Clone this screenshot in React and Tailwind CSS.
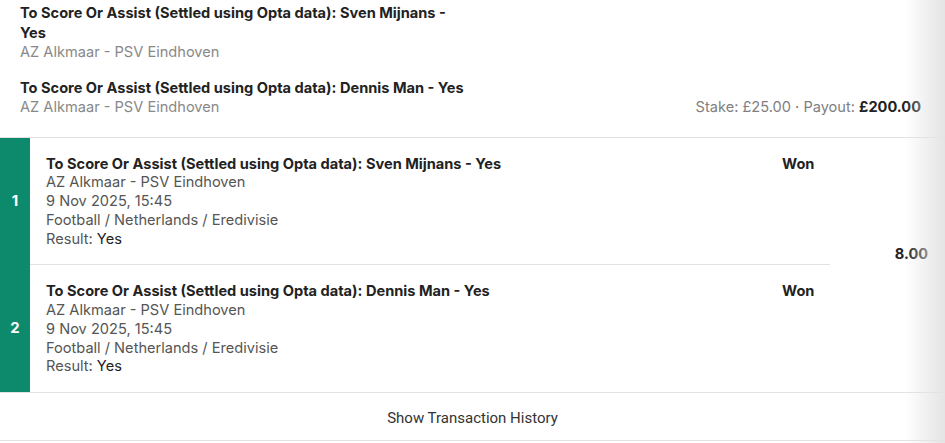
import React from "react";

const legs = [
  { n: 1, player: "Sven Mijnans" },
  { n: 2, player: "Dennis Man" },
];

const Leg = ({ leg, last }) => (
  <div className="flex">
    <div className="w-[30px] shrink-0 bg-[#0d8a6b] flex items-center justify-center text-white font-bold text-[15px]">
      {leg.n}
    </div>
    <div
      className={
        "flex flex-1 pt-[17px] pb-[16px] pl-4 " +
        (last ? "" : "border-b border-[#e2e2e2]")
      }
    >
      <div className="flex-1 text-[14.6px] leading-[18.75px] text-[#555]">
        <div className="font-bold text-[#222]">
          To Score Or Assist (Settled using Opta data): {leg.player} - Yes
        </div>
        <div>AZ Alkmaar - PSV Eindhoven</div>
        <div>9 Nov 2025, 15:45</div>
        <div>Football / Netherlands / Eredivisie</div>
        <div>
          Result: <span className="text-[#222]">Yes</span>
        </div>
      </div>
      <div className="w-[48px] font-bold text-[14.6px] leading-[18.75px] text-[#222]">
        Won
      </div>
    </div>
  </div>
);

export default function App() {
  return (
    <div className="relative w-[945px] h-[443px] bg-white overflow-hidden font-['Inter',sans-serif]">
      <div className="pl-5 pr-6 pt-[4px] pb-[19px] border-b border-[#e2e2e2] text-[14.6px] leading-[19.5px]">
        <div className="w-[455px]">
          <div className="font-bold text-[#222]">
            To Score Or Assist (Settled using Opta data): Sven Mijnans - Yes
          </div>
          <div className="text-[#888]">AZ Alkmaar - PSV Eindhoven</div>
        </div>
        <div className="flex items-end justify-between mt-[16px]">
          <div>
            <div className="font-bold text-[#222]">
              To Score Or Assist (Settled using Opta data): Dennis Man - Yes
            </div>
            <div className="text-[#888]">AZ Alkmaar - PSV Eindhoven</div>
          </div>
          <div className="text-[#808080]">
            Stake: £25.00 · Payout:{" "}
            <span className="font-bold text-[#222]">£200.00</span>
          </div>
        </div>
      </div>

      <div className="flex border-b border-[#e2e2e2]">
        <div className="w-[830px] shrink-0">
          {legs.map((leg, i) => (
            <Leg key={leg.n} leg={leg} last={i === legs.length - 1} />
          ))}
        </div>
        <div className="flex-1 flex items-center justify-center pb-[20px] pl-[48px] font-bold text-[14.6px] text-[#222]">
          8.00
        </div>
      </div>

      <div className="h-[48px] pt-[4px] flex items-center justify-center border-b border-[#e2e2e2] text-[15px] text-[#333] font-['Roboto',sans-serif]">
        Show Transaction History
      </div>

      <div className="pointer-events-none absolute top-0 right-0 h-full w-[40px] bg-linear-to-r from-white/0 to-[#e4e4e4]" />
    </div>
  );
}
